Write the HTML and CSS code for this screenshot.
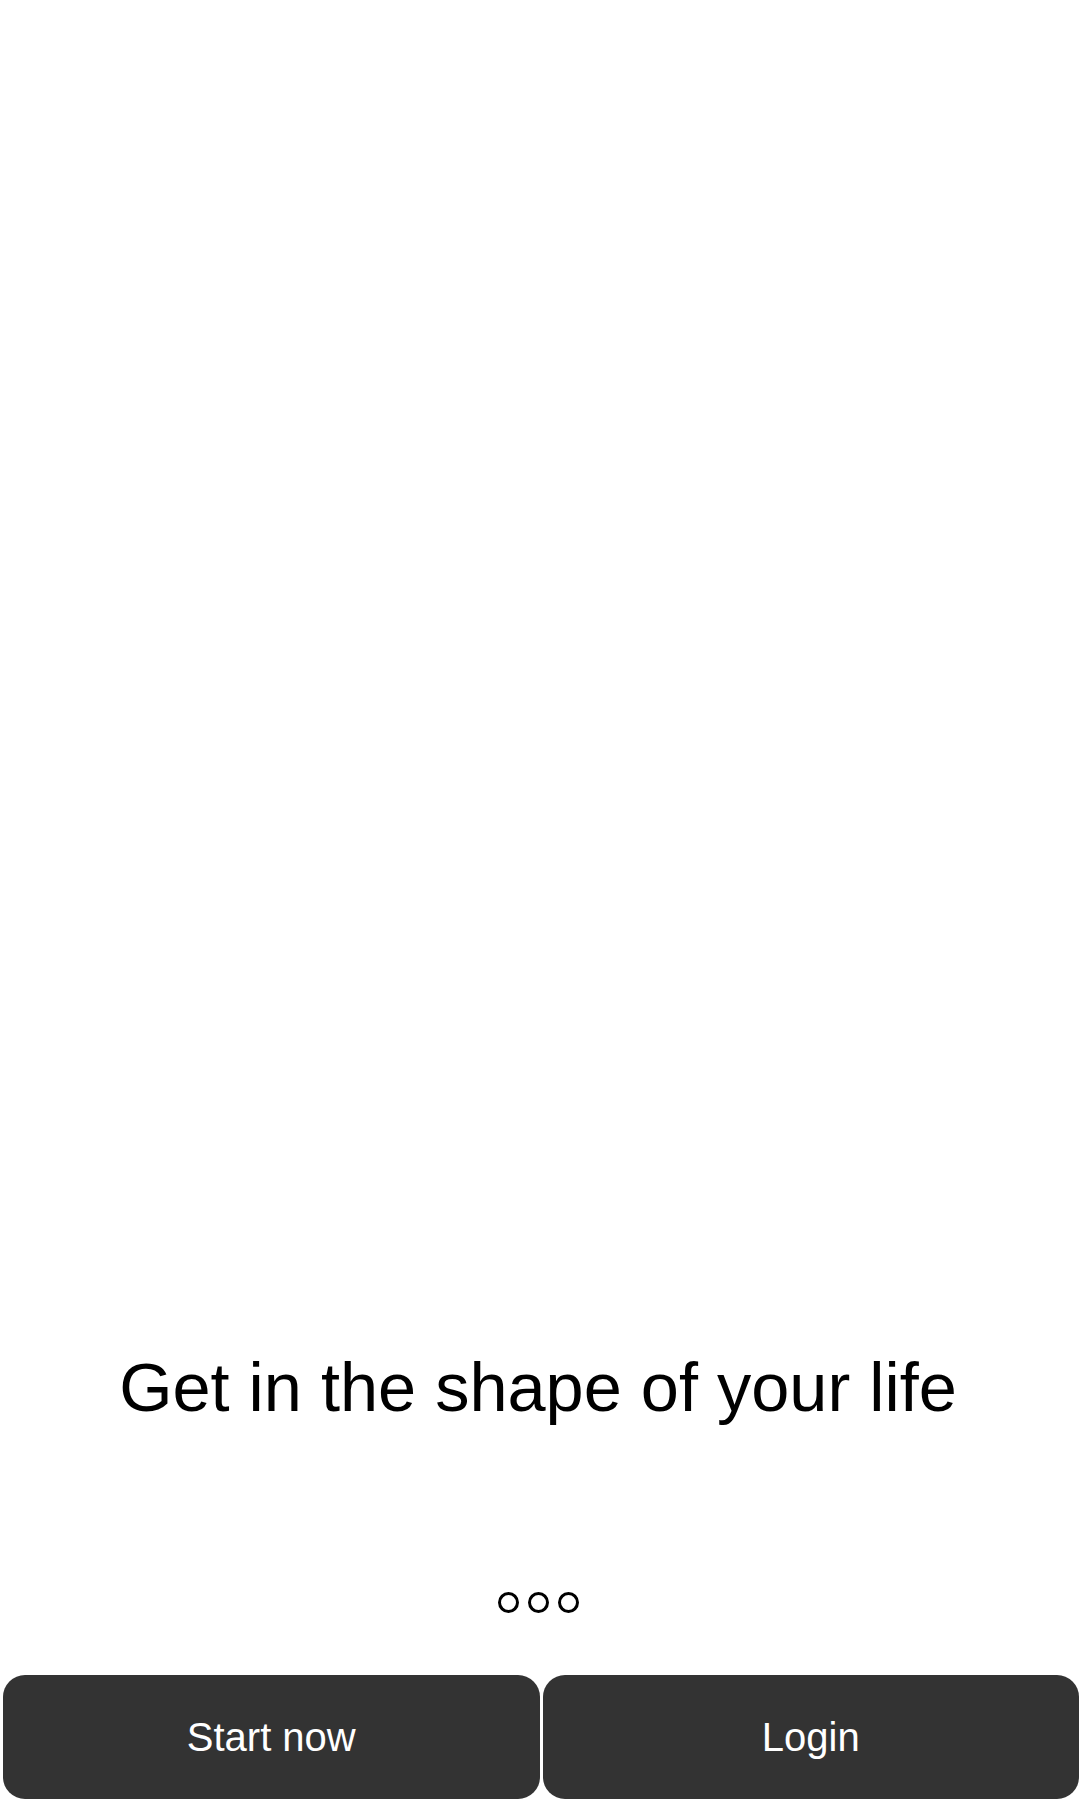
FILE: index.html
```html
<!DOCTYPE html>
<html lang="en">
<head>
<meta charset="utf-8">
<title>Get in the shape of your life</title>
<link rel="stylesheet" href="styles.css">
</head>
<body>
<main class="screen">
  <h1 class="headline">Get in the shape of your life</h1>
  <div class="dots">
    <span class="dot"></span>
    <span class="dot"></span>
    <span class="dot"></span>
  </div>
  <div class="actions">
    <button class="btn">Start now</button>
    <button class="btn">Login</button>
  </div>
</main>
</body>
</html>
```

FILE: styles.css
```css
html, body {
  margin: 0;
  padding: 0;
  background: #ffffff;
}

.screen {
  box-sizing: border-box;
  height: 1800px;
  width: 1080px;
  display: flex;
  flex-direction: column;
  justify-content: flex-end;
  padding-bottom: 1px;
  font-family: "Liberation Sans", Arial, sans-serif;
}

.headline {
  margin: 0 4px 164px 0;
  font-size: 68.5px;
  font-weight: normal;
  line-height: 80px;
  color: #000;
  text-align: center;
}

.dots {
  display: flex;
  justify-content: center;
  gap: 9px;
  margin-bottom: 62px;
  padding-right: 4px;
}

.dot {
  box-sizing: border-box;
  width: 21px;
  height: 21px;
  border: 3px solid #000;
  border-radius: 50%;
}

.actions {
  display: flex;
  gap: 3px;
  padding: 0 1px 0 3px;
}

.btn {
  flex: 1 1 0;
  height: 124px;
  border: none;
  border-radius: 22px;
  background: #333333;
  color: #ffffff;
  font-family: "Liberation Sans", Arial, sans-serif;
  font-size: 40px;
  padding: 0;
}
```
